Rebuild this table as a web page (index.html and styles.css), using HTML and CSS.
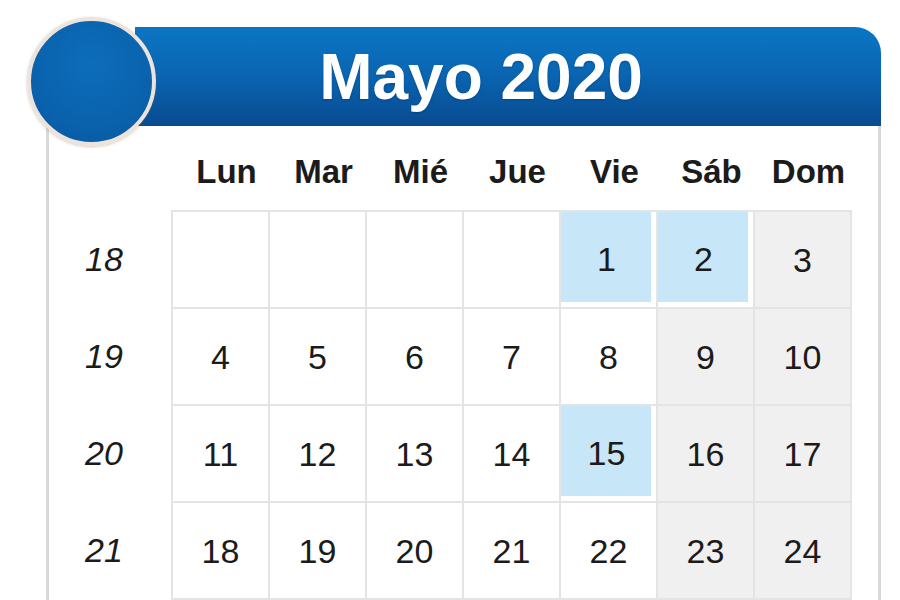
FILE: index.html
```html
<!DOCTYPE html>
<html lang="es">
<head>
<meta charset="utf-8">
<title>Mayo 2020</title>
<link rel="stylesheet" href="styles.css">
</head>
<body>
<div class="page">
  <div class="card">
    <div class="badge"></div>
    <div class="header"><h1 class="title">Mayo 2020</h1></div>
    <div class="body">
      <div class="daynames">
        <div class="spacer"></div>
        <div class="dn">Lun</div><div class="dn">Mar</div><div class="dn">Mié</div><div class="dn">Jue</div><div class="dn">Vie</div><div class="dn">Sáb</div><div class="dn">Dom</div>
      </div>
      <div class="main">
        <div class="weeks">
          <div class="wk">18</div><div class="wk">19</div><div class="wk">20</div><div class="wk">21</div>
        </div>
        <div class="grid">
          <div class="cell"></div><div class="cell"></div><div class="cell"></div><div class="cell"></div><div class="cell hl">1</div><div class="cell hl">2</div><div class="cell we">3</div>
          <div class="cell">4</div><div class="cell">5</div><div class="cell">6</div><div class="cell">7</div><div class="cell">8</div><div class="cell we">9</div><div class="cell we">10</div>
          <div class="cell">11</div><div class="cell">12</div><div class="cell">13</div><div class="cell">14</div><div class="cell hl">15</div><div class="cell we">16</div><div class="cell we">17</div>
          <div class="cell">18</div><div class="cell">19</div><div class="cell">20</div><div class="cell">21</div><div class="cell">22</div><div class="cell we">23</div><div class="cell we">24</div>
        </div>
      </div>
    </div>
  </div>
</div>
</body>
</html>
```
FILE: styles.css
```css
html, body {
  margin: 0;
  padding: 0;
  background: #ffffff;
  overflow: hidden;
}
body {
  font-family: "Liberation Sans", Arial, sans-serif;
  color: #1b1b1b;
  width: 900px;
  height: 600px;
}
.page {
  padding: 27px 0 0 46px;
}
.card {
  position: relative;
  width: 835px;
}
.badge {
  position: absolute;
  left: -19px;
  top: -10px;
  width: 121px;
  height: 121px;
  border-radius: 50%;
  border: 4px solid #ece4dc;
  background: radial-gradient(circle at 50% 35%, #0d6dbb 0%, #0a62ad 60%, #09579f 100%);
  box-shadow: 0 1px 3px rgba(120, 100, 80, 0.35);
  z-index: 2;
}
.header {
  margin-left: 89px;
  height: 99px;
  border-radius: 0 26px 0 0;
  background: linear-gradient(#0b76c4 0%, #0a66b3 45%, #084b90 100%);
  display: flex;
  align-items: center;
  justify-content: center;
  padding-right: 54px;
}
.title {
  margin: 0;
  color: #ffffff;
  font-size: 64px;
  font-weight: bold;
  line-height: 1;
  letter-spacing: 0;
  text-shadow: 0 1px 2px rgba(0, 30, 70, 0.35);
}
.body {
  border-left: 3px solid #d9d9d9;
  border-right: 3px solid #d9d9d9;
  height: 480px;
}
.daynames {
  display: grid;
  grid-template-columns: 122px repeat(7, 97px);
  padding-top: 30px;
  height: 54px;
}
.dn {
  font-weight: bold;
  font-size: 33px;
  line-height: 32px;
  text-align: center;
  padding-left: 14px;
}
.main {
  display: flex;
}
.weeks {
  width: 122px;
  padding-top: 2px;
  display: flex;
  flex-direction: column;
  gap: 2px;
}
.wk {
  height: 95px;
  display: flex;
  align-items: center;
  justify-content: center;
  padding-right: 12px;
  font-style: italic;
  font-size: 34px;
}
.grid {
  display: grid;
  grid-template-columns: repeat(7, 95px);
  grid-auto-rows: 95px;
  gap: 2px;
  padding: 2px;
  background: #e4e4e4;
}
.cell {
  background: #ffffff;
  display: flex;
  align-items: center;
  justify-content: center;
  font-size: 34px;
  padding-top: 2px;
}
.cell.we {
  background: #f0f0f0;
}
.cell.hl {
  background: #c7e6f7;
  box-shadow: inset -5px -5px 0 #ffffff;
  padding-right: 4px;
  padding-bottom: 3px;
}
```
